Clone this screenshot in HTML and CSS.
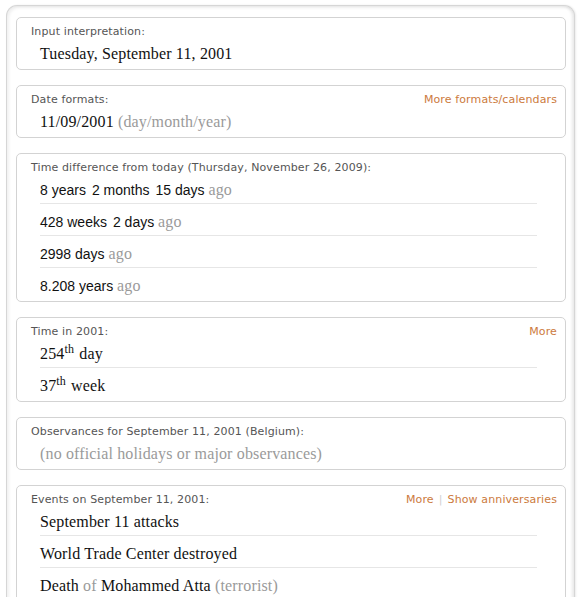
FILE: index.html
```html
<!DOCTYPE html>
<html>
<head>
<meta charset="utf-8">
<link rel="stylesheet" href="styles.css">
</head>
<body>
<div class="frame">
  <section class="pod">
    <div class="pod-head"><span class="label">Input interpretation:</span></div>
    <div class="row serif">Tuesday, September 11, 2001</div>
  </section>

  <section class="pod">
    <div class="pod-head"><span class="label">Date formats:</span><span class="links"><a>More formats/calendars</a></span></div>
    <div class="row serif">11/09/2001 <span class="muted">(day/month/year)</span></div>
  </section>

  <section class="pod">
    <div class="pod-head"><span class="label">Time difference from today (Thursday, November 26, 2009):</span></div>
    <div class="row sans lined">8 years<span class="sp"></span>2 months<span class="sp"></span>15 days <span class="muted serif">ago</span></div>
    <div class="row sans lined">428 weeks<span class="sp"></span>2 days <span class="muted serif">ago</span></div>
    <div class="row sans lined">2998 days <span class="muted serif">ago</span></div>
    <div class="row sans">8.208 years <span class="muted serif">ago</span></div>
  </section>

  <section class="pod">
    <div class="pod-head"><span class="label">Time in 2001:</span><span class="links"><a>More</a></span></div>
    <div class="row serif lined">254<sup>th</sup> day</div>
    <div class="row serif">37<sup>th</sup> week</div>
  </section>

  <section class="pod">
    <div class="pod-head"><span class="label">Observances for September 11, 2001 (Belgium):</span></div>
    <div class="row serif muted">(no official holidays or major observances)</div>
  </section>

  <section class="pod">
    <div class="pod-head"><span class="label">Events on September 11, 2001:</span><span class="links"><a>More</a><span class="bar">|</span><a>Show anniversaries</a></span></div>
    <div class="row serif lined">September 11 attacks</div>
    <div class="row serif lined">World Trade Center destroyed</div>
    <div class="row serif">Death <span class="muted">of</span> Mohammed Atta <span class="muted">(terrorist)</span></div>
  </section>
</div>
</body>
</html>
```

FILE: styles.css
```css
html, body {
  margin: 0;
  padding: 0;
  background: #ffffff;
  overflow: hidden;
}

.frame {
  margin: 5px 5px 0 6px;
  height: 640px;
  box-sizing: border-box;
  border: 1px solid #d6d6d6;
  border-bottom: none;
  border-radius: 11px 11px 0 0;
  padding: 11px 8px 0 9px;
  background: #fff;
  box-shadow: inset 2px 2px 3px rgba(0,0,0,0.06), inset -2px 0 3px rgba(0,0,0,0.09), 1px 0 2px rgba(0,0,0,0.08);
  display: flex;
  flex-direction: column;
  gap: 15px;
}

.pod {
  border: 1px solid #d3d3d3;
  border-radius: 5px;
  padding: 0 0 2px 0;
  background: #fff;
}

.pod-head {
  height: 18px;
  box-sizing: border-box;
  padding: 7px 8px 0 14px;
  display: flex;
  justify-content: space-between;
  align-items: flex-start;
  font-family: "DejaVu Sans", Verdana, sans-serif;
  font-size: 11px;
  letter-spacing: 0.12px;
  line-height: 13px;
}

.label {
  color: #555;
  white-space: nowrap;
}

.links a {
  color: #cc7a3d;
}

.links .bar {
  color: #d0d0d0;
  margin: 0 5px;
}

.row {
  margin: 0 28px 0 23px;
  height: 31px;
  box-sizing: border-box;
  padding-top: 7px;
  line-height: 22px;
  color: #111;
  white-space: nowrap;
}

.row.lined {
  height: 32px;
  border-bottom: 1px solid #e6e6e6;
}

.serif {
  font-family: "Liberation Serif", "Times New Roman", serif;
  font-size: 16px;
  letter-spacing: 0.15px;
}

.sans {
  font-family: "Liberation Sans", Arial, sans-serif;
  font-size: 14px;
}

.muted {
  color: #9a9a9a;
}

.sp {
  display: inline-block;
  width: 6px;
}

sup {
  font-size: 12px;
  line-height: 0;
  vertical-align: 6px;
  margin-right: 1px;
}
```
